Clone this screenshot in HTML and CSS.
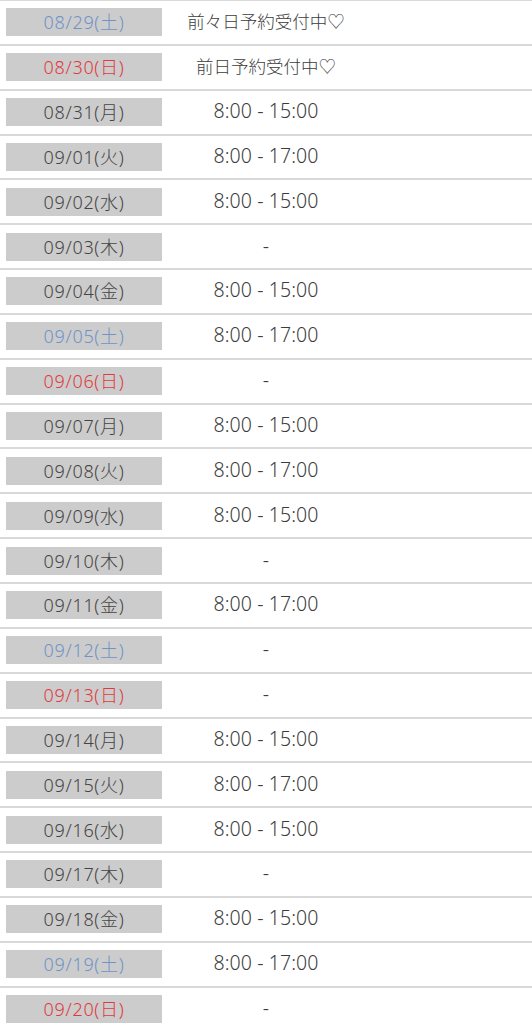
FILE: index.html
```html
<!DOCTYPE html>
<html lang="ja">
<head>
<meta charset="utf-8">
<link rel="stylesheet" href="styles.css">
</head>
<body>
<div class="schedule">
  <div class="row"><div class="date sat">08/29(土)</div><div class="time note">前々日予約受付中♡</div></div>
  <div class="row"><div class="date sun">08/30(日)</div><div class="time note">前日予約受付中♡</div></div>
  <div class="row"><div class="date">08/31(月)</div><div class="time">8:00 - 15:00</div></div>
  <div class="row"><div class="date">09/01(火)</div><div class="time">8:00 - 17:00</div></div>
  <div class="row"><div class="date">09/02(水)</div><div class="time">8:00 - 15:00</div></div>
  <div class="row"><div class="date">09/03(木)</div><div class="time">-</div></div>
  <div class="row"><div class="date">09/04(金)</div><div class="time">8:00 - 15:00</div></div>
  <div class="row"><div class="date sat">09/05(土)</div><div class="time">8:00 - 17:00</div></div>
  <div class="row"><div class="date sun">09/06(日)</div><div class="time">-</div></div>
  <div class="row"><div class="date">09/07(月)</div><div class="time">8:00 - 15:00</div></div>
  <div class="row"><div class="date">09/08(火)</div><div class="time">8:00 - 17:00</div></div>
  <div class="row"><div class="date">09/09(水)</div><div class="time">8:00 - 15:00</div></div>
  <div class="row"><div class="date">09/10(木)</div><div class="time">-</div></div>
  <div class="row"><div class="date">09/11(金)</div><div class="time">8:00 - 17:00</div></div>
  <div class="row"><div class="date sat">09/12(土)</div><div class="time">-</div></div>
  <div class="row"><div class="date sun">09/13(日)</div><div class="time">-</div></div>
  <div class="row"><div class="date">09/14(月)</div><div class="time">8:00 - 15:00</div></div>
  <div class="row"><div class="date">09/15(火)</div><div class="time">8:00 - 17:00</div></div>
  <div class="row"><div class="date">09/16(水)</div><div class="time">8:00 - 15:00</div></div>
  <div class="row"><div class="date">09/17(木)</div><div class="time">-</div></div>
  <div class="row"><div class="date">09/18(金)</div><div class="time">8:00 - 15:00</div></div>
  <div class="row"><div class="date sat">09/19(土)</div><div class="time">8:00 - 17:00</div></div>
  <div class="row"><div class="date sun">09/20(日)</div><div class="time">-</div></div>
</div>
</body>
</html>
```
FILE: styles.css
```css
html, body {
  margin: 0;
  padding: 0;
  background: #ffffff;
}
body {
  font-family: "Noto Sans", "Noto Sans CJK JP", sans-serif;
  color: #3a3a3a;
  overflow: hidden;
}
.schedule {
  border-top: 1px solid #d9d9d9;
}
.row {
  display: grid;
  grid-template-columns: 168px 196px;
  align-items: center;
  height: 42.85px;
  border-bottom: 2px solid #d9d9d9;
}
.date {
  margin-left: 6px;
  width: 156px;
  height: 28px;
  background: #cccccc;
  font-size: 18px;
  letter-spacing: 0.7px;
  line-height: 28px;
  text-align: center;
  color: #444444;
  font-weight: 300;
}
.date.sat { color: #6f93c8; }
.date.sun { color: #e2393d; }
.time {
  font-size: 19.5px;
  letter-spacing: 0.1px;
  line-height: 24px;
  margin-top: -2px;
  text-align: center;
  color: #3c3c3c;
  font-weight: 300;
}
.time.note {
  font-size: 17.5px;
  letter-spacing: 0;
}
```
